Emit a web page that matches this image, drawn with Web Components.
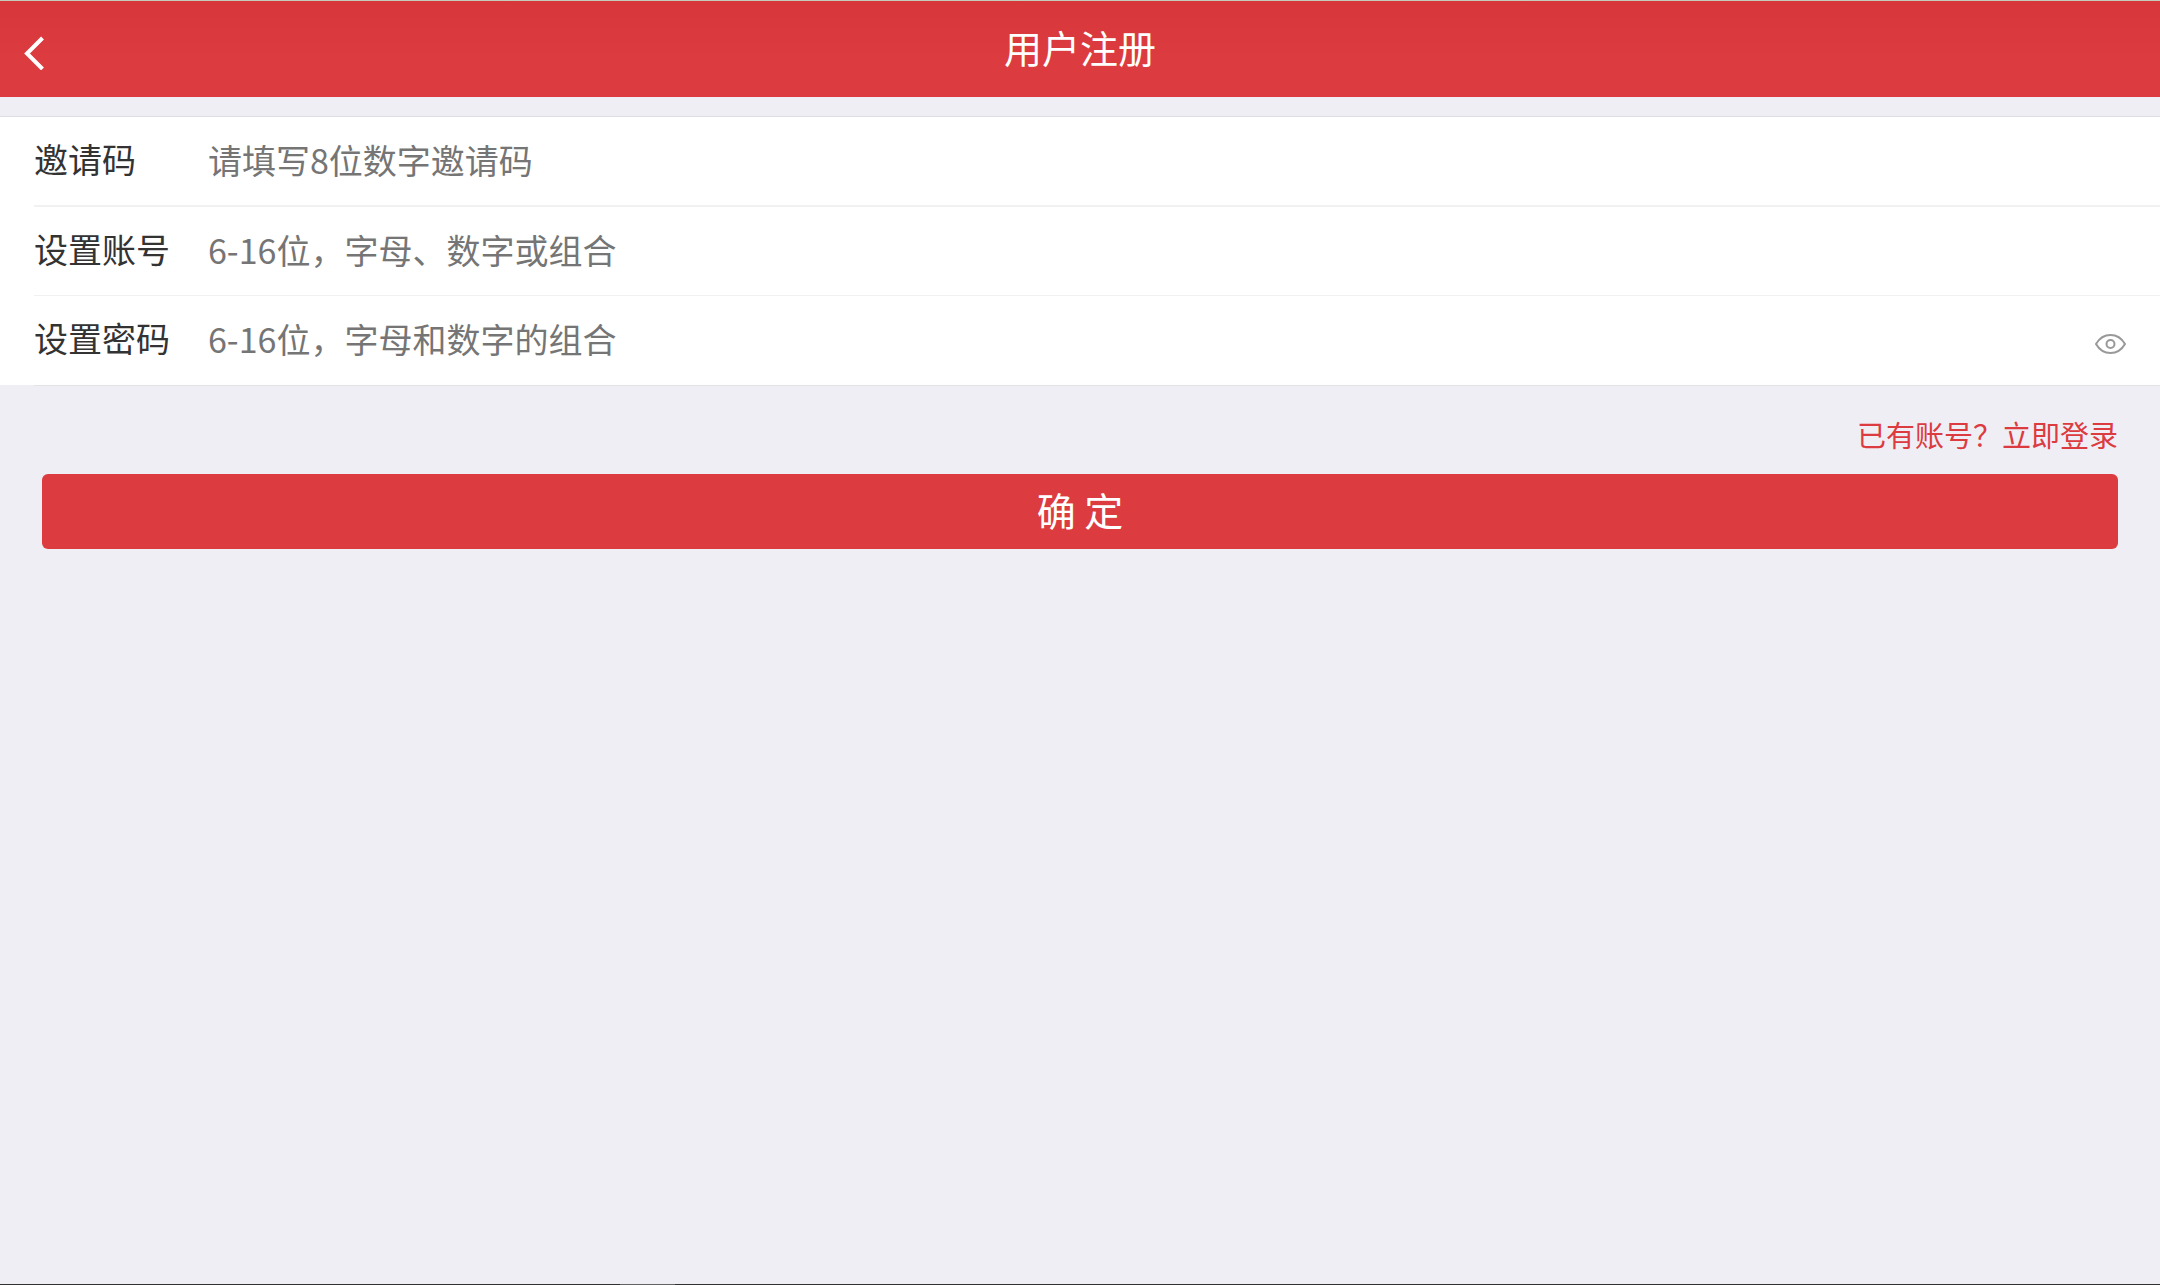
<!DOCTYPE html>
<html lang="zh-CN">
<head>
<meta charset="utf-8">
<meta name="viewport" content="width=device-width, initial-scale=1">
<title>用户注册</title>
<style>
:root { --red: #dc3b3f; --page: #efeef4; --ink: #333; --hint: #757575; }
body { margin: 0; background: var(--page); color: var(--ink); font-family: "Noto Sans CJK SC", sans-serif; }
</style>
</head>
<body>
<register-page></register-page>
<script>
class BaseElement extends HTMLElement {
  constructor() {
    super();
    this.attachShadow({ mode: "open" });
  }
  connectedCallback() {
    this.shadowRoot.innerHTML = this.render();
  }
}

customElements.define("title-bar", class extends BaseElement {
  render() {
    return `<style>
      :host { display: block; border-top: 1px solid #c3cbb9; }
      header { display: grid; grid-template-columns: 80px 1fr 80px; align-items: center; height: 96px;
        background: linear-gradient(#d7363a, #dc3b3f 60%); color: #fff; }
      button { display: flex; align-items: center; height: 96px; padding: 8px 0 0 24px; border: 0; background: none; color: inherit; }
      svg { display: block; }
      h1 { margin: 0; padding-bottom: 4px; font-size: 38px; line-height: 56px; font-weight: 400; text-align: center; }
    </style>
    <header>
      <button type="button" aria-label="返回">
        <svg width="20" height="34" viewBox="0 0 20 34" fill="none" stroke="currentColor" stroke-width="4"><path d="M18.500 2 3 17.500 18.500 33"/></svg>
      </button>
      <h1><slot></slot></h1>
    </header>`;
  }
});

customElements.define("form-field", class extends BaseElement {
  render() {
    const type = this.getAttribute("type") || "text";
    return `<style>
      :host { display: block; margin-left: 34px; border-bottom: 1px solid #f1f1f2; }
      :host(:first-of-type) { border-bottom-width: 2px; }
      :host(:last-of-type) { border-color: transparent; }
      .row { display: flex; align-items: center; box-sizing: border-box; height: 88px; padding: 0 32px 4px 0; font-size: 34px; line-height: 48px; }
      label { flex: 0 0 174px; }
      input { flex: 1; min-width: 0; height: 72px; padding: 0; border: 0; outline: 0; background: none; font: inherit; color: inherit; }
      input::placeholder { color: var(--hint); opacity: 1; }
    </style>
    <div class="row">
      <label for="field">${this.getAttribute("label")}</label>
      <input id="field" type="${type}" placeholder="${this.getAttribute("hint")}">
      <slot></slot>
    </div>`;
  }
});

customElements.define("reveal-button", class extends BaseElement {
  render() {
    return `<style>
      :host { display: block; }
      button { display: block; padding: 12px 0 0; border: 0; background: none; color: #999; }
      svg { display: block; }
    </style>
    <button type="button" aria-label="显示密码">
      <svg width="34" height="22" viewBox="0 0 34 22" fill="none" stroke="currentColor" stroke-width="2">
        <path d="M2 11C5.500 5 10.500 2 16.500 2S27.500 5 31 11C27.500 17 22.500 20 16.500 20S5.500 17 2 11Z"/>
        <circle cx="16.500" cy="11" r="4"/>
      </svg>
    </button>`;
  }
});

customElements.define("field-list", class extends BaseElement {
  render() {
    return `<style>
      :host { display: block; margin-top: 19px; }
      .fields { border-top: 1px solid #dedee2; background: #fff; }
      .edge { height: 1px; margin-left: 34px; background: #e3e2e7; }
    </style>
    <div class="fields"><slot></slot></div><div class="edge"></div>`;
  }
});

customElements.define("form-actions", class extends BaseElement {
  render() {
    return `<style>
      :host { display: flex; flex-direction: column; gap: 20px; padding: 28px 42px; }
      a { align-self: flex-end; color: var(--red); font-size: 29px; line-height: 40px; text-decoration: none; }
      button { height: 75px; padding: 0 0 5px; border: 0; border-radius: 6px; background: var(--red); color: #fff; font: inherit; font-size: 39px; line-height: 56px; }
    </style>
    <a href="#login">已有账号？立即登录</a>
    <button type="submit">确&nbsp;定</button>`;
  }
});

customElements.define("register-page", class extends BaseElement {
  render() {
    return `<style>
      :host { display: flex; flex-direction: column; min-height: 100vh; }
      main { flex: 1; }
      footer { height: 1px; background: linear-gradient(90deg, #303030 620px, #626262 620px 675px, #303030 675px); }
    </style>
    <title-bar>用户注册</title-bar>
    <main>
      <field-list>
        <form-field label="邀请码" hint="请填写8位数字邀请码"></form-field>
        <form-field label="设置账号" hint="6-16位，字母、数字或组合"></form-field>
        <form-field label="设置密码" hint="6-16位，字母和数字的组合" type="password"><reveal-button></reveal-button></form-field>
      </field-list>
      <form-actions></form-actions>
    </main>
    <footer></footer>
    `;
  }
});
</script>
</body>
</html>
